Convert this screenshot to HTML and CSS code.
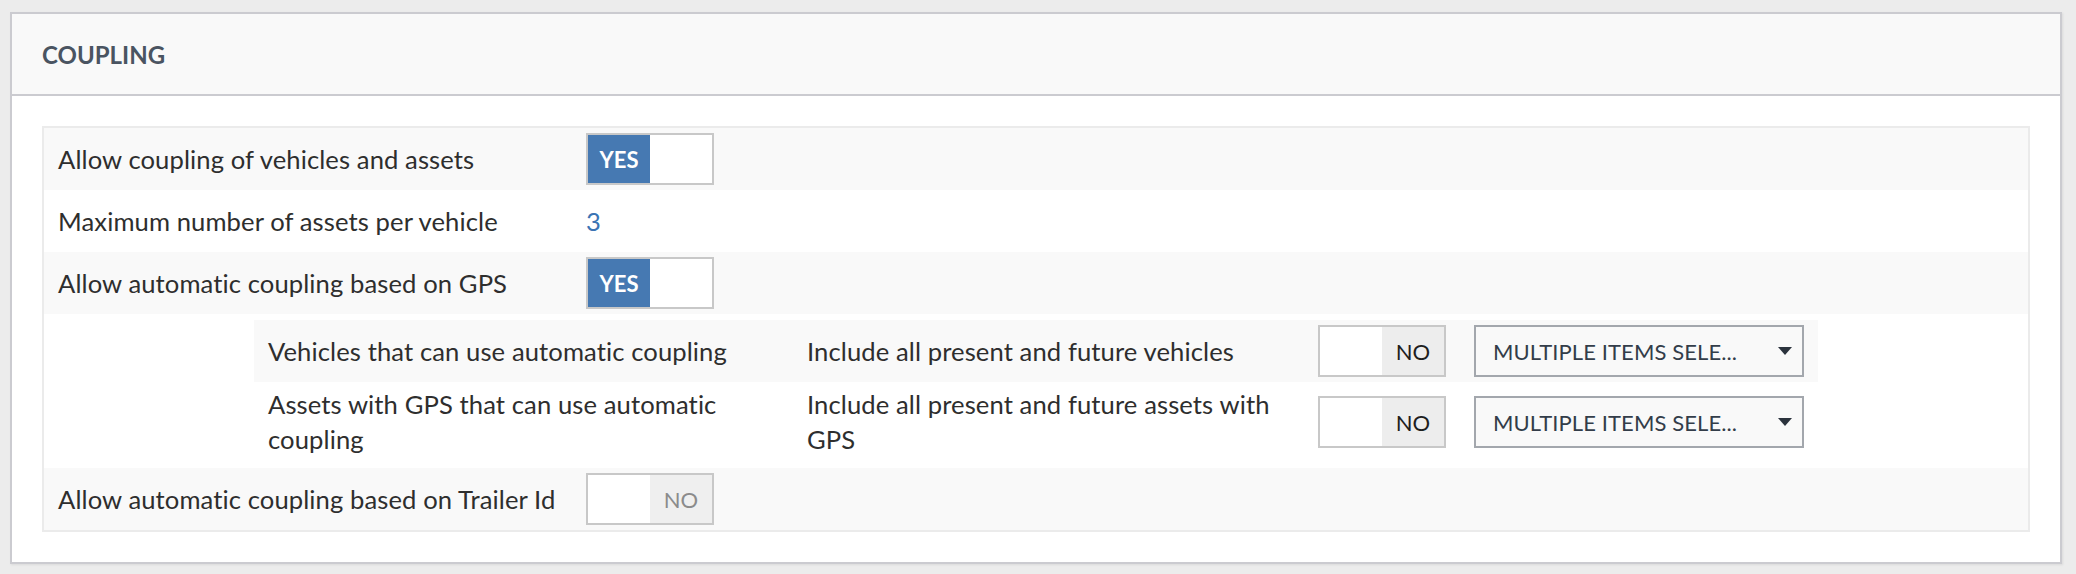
FILE: index.html
```html
<!DOCTYPE html>
<html lang="en">
<head>
<meta charset="utf-8">
<title>Coupling</title>
<link rel="stylesheet" href="styles.css">
</head>
<body>
<section class="panel">
  <header class="panel-head"><h2 class="panel-title">COUPLING</h2></header>
  <div class="panel-body">
    <div class="settings">
      <div class="row odd">
        <div class="label">Allow coupling of vehicles and assets</div>
        <div class="value">
          <div class="toggle on"><span class="t-yes">YES</span><span class="t-blank"></span></div>
        </div>
      </div>
      <div class="row">
        <div class="label">Maximum number of assets per vehicle</div>
        <div class="value"><span class="number">3</span></div>
      </div>
      <div class="row odd">
        <div class="label">Allow automatic coupling based on GPS</div>
        <div class="value">
          <div class="toggle on"><span class="t-yes">YES</span><span class="t-blank"></span></div>
        </div>
      </div>
      <div class="row-nested">
        <div class="nested">
          <div class="nrow odd">
            <div class="ncell">Vehicles that can use automatic coupling</div>
            <div class="ncell">Include all present and future vehicles</div>
            <div class="ncell">
              <div class="toggle off"><span class="t-blank"></span><span class="t-no">NO</span></div>
            </div>
            <div class="ncell">
              <div class="select"><span class="select-text">MULTIPLE ITEMS SELE...</span><span class="caret"></span></div>
            </div>
          </div>
          <div class="nrow">
            <div class="ncell">Assets with GPS that can use automatic coupling</div>
            <div class="ncell">Include all present and future assets with GPS</div>
            <div class="ncell">
              <div class="toggle off"><span class="t-blank"></span><span class="t-no">NO</span></div>
            </div>
            <div class="ncell">
              <div class="select"><span class="select-text">MULTIPLE ITEMS SELE...</span><span class="caret"></span></div>
            </div>
          </div>
        </div>
      </div>
      <div class="row odd">
        <div class="label">Allow automatic coupling based on Trailer Id</div>
        <div class="value">
          <div class="toggle off disabled"><span class="t-blank"></span><span class="t-no">NO</span></div>
        </div>
      </div>
    </div>
  </div>
</section>
</body>
</html>
```

FILE: styles.css
```css
* { box-sizing: border-box; }

html, body {
  margin: 0;
  background: #ececec;
}

body {
  padding: 12px 14px 10px 10px;
  font-family: Lato, "Open Sans", "Liberation Sans", sans-serif;
  color: #333;
  font-variant-ligatures: none;
}

.panel {
  background: #fff;
  border: 2px solid #cbcbd0;
  box-shadow: 1px 1px 2px rgba(0, 0, 0, 0.08);
}

.panel-head {
  height: 82px;
  background: #f9f9f9;
  border-bottom: 2px solid #cbcbd0;
  display: flex;
  align-items: center;
  padding-left: 30px;
}

.panel-title {
  margin: 0;
  font-size: 24px;
  font-weight: 700;
  color: #4a5461;
  letter-spacing: 0;
}

.panel-body {
  padding: 30px;
}

.settings {
  border: 2px solid #ebebeb;
}

.row {
  display: grid;
  grid-template-columns: 528px 1fr;
  align-items: center;
  min-height: 62px;
  padding: 5px 0;
  background: #fff;
}

.row.odd { background: #f9f9f9; }

.label {
  padding: 0 14px;
  font-size: 25.6px;
  line-height: 35px;
  letter-spacing: 0.1px;
  color: #2e2e2e;
}

.value {
  padding: 0 14px;
  display: flex;
  align-items: center;
}

.number {
  font-size: 25.6px;
  color: #3b74b4;
  line-height: 35px;
}

.toggle {
  display: flex;
  width: 128px;
  height: 52px;
  border: 2px solid #c8c8c8;
  background: #fff;
}

.toggle span {
  flex: 1;
  display: flex;
  align-items: center;
  justify-content: center;
  font-size: 22px;
}

.t-yes {
  background: #4679b2;
  color: #fff;
  font-weight: 700;
}

.t-no {
  background: #ededed;
  color: #1e1e1e;
}

.toggle.disabled .t-no {
  color: #8b8b8b;
  background: #efefef;
}

.row-nested {
  padding: 6px 0 6px 210px;
  background: #fff;
}

.nested {
  width: 1564px;
}

.nrow {
  display: grid;
  grid-template-columns: 539px 511px 156px 358px;
  align-items: center;
  padding: 5px 0;
  min-height: 62px;
  background: #fff;
}

.nrow.odd { background: #f9f9f9; }

.ncell {
  padding: 0 14px;
  font-size: 25.6px;
  line-height: 35px;
  letter-spacing: 0.1px;
  color: #2e2e2e;
}

.select {
  width: 330px;
  height: 52px;
  border: 2px solid #a3a7ad;
  background: #f9f9f9;
  display: flex;
  align-items: center;
  justify-content: space-between;
  padding: 0 10px 0 17px;
}

.select-text {
  font-size: 22px;
  color: #333d49;
}

.caret {
  width: 0;
  height: 0;
  border-left: 7.5px solid transparent;
  border-right: 7.5px solid transparent;
  border-top: 8px solid #2b333d;
}
```
